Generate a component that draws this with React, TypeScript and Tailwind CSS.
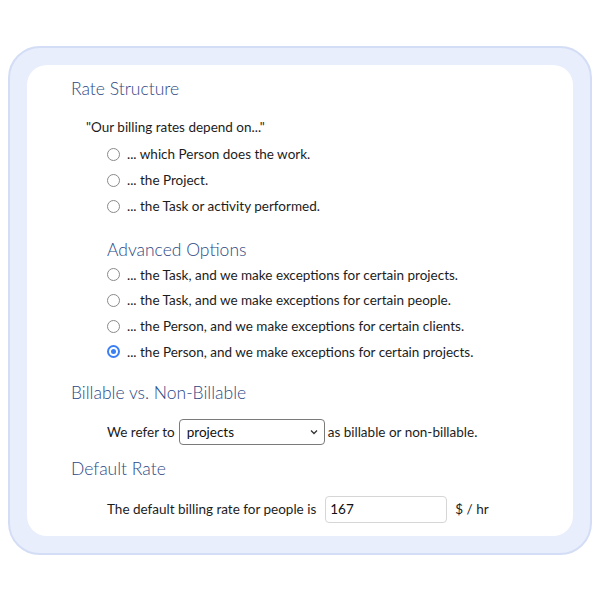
import React from "react";

function Radio({ checked = false, label, h = "h-[26px]" }: { checked?: boolean; label: string; h?: string }) {
  return (
    <div className={`flex items-center ${h}`}>
      {checked ? (
        <span className="w-[13px] h-[13px] rounded-full border-[2px] border-[#3b7ff5] bg-white flex items-center justify-center shrink-0">
          <span className="w-[5px] h-[5px] rounded-full bg-[#3b7ff5]" />
        </span>
      ) : (
        <span className="w-[13px] h-[13px] rounded-full border border-[#8a8a8a] bg-white shrink-0" />
      )}
      <span className="ml-[7px] text-[13.5px] text-[#1c1c1c]">{label}</span>
    </div>
  );
}

export default function App() {
  return (
    <div className="w-[600px] h-[600px] bg-white pt-[46px] pl-[8px]" style={{ fontFamily: "Lato, 'Open Sans', sans-serif" }}>
      <div className="w-[584px] h-[509px] rounded-[32px] border-2 border-[#d3ddf5] bg-[#e9eefc] p-[17px]">
        <div className="w-full h-full rounded-[20px] bg-white pl-[44px] pt-[12px]">
          <h2 className="text-[17.5px] leading-[24px] font-light text-[#2c4884]">Rate Structure</h2>
          <p className="mt-[17px] ml-[15px] text-[13.5px] leading-[18px] text-[#1c1c1c]">"Our billing rates depend on..."</p>
          <div className="mt-[5px] ml-[36px] flex flex-col">
            <Radio label="... which Person does the work." />
            <Radio label="... the Project." />
            <Radio label="... the Task or activity performed." />
          </div>
          <h3 className="mt-[19px] ml-[36px] text-[17.5px] leading-[24px] font-light text-[#2c4884]">Advanced Options</h3>
          <div className="ml-[36px] flex flex-col">
            <Radio h="h-[25.7px]" label="... the Task, and we make exceptions for certain projects." />
            <Radio h="h-[25.7px]" label="... the Task, and we make exceptions for certain people." />
            <Radio h="h-[25.7px]" label="... the Person, and we make exceptions for certain clients." />
            <Radio h="h-[25.7px]" checked label="... the Person, and we make exceptions for certain projects." />
          </div>
          <h2 className="mt-[16px] text-[17.5px] leading-[24px] font-light text-[#2c4884]">Billable vs. Non-Billable</h2>
          <div className="mt-[14px] ml-[36px] flex items-center text-[13.5px] text-[#1c1c1c]">
            <span>We refer to</span>
            <div className="ml-[4px] w-[146px] h-[26px] rounded-[4px] border border-[#7a7a7a] flex items-center justify-between pl-[7px] pr-[5px]">
              <span className="text-[13.5px] text-[#111]">projects</span>
              <svg width="10" height="10" viewBox="0 0 10 10" fill="none" stroke="#333" strokeWidth="1.3">
                <path d="M2 3.5 L5 6.5 L8 3.5" />
              </svg>
            </div>
            <span className="ml-[3px]">as billable or non-billable.</span>
          </div>
          <h2 className="mt-[12px] text-[17.5px] leading-[24px] font-light text-[#2c4884]">Default Rate</h2>
          <div className="mt-[15px] ml-[36px] flex items-center text-[13.5px] text-[#1c1c1c]">
            <span>The default billing rate for people is</span>
            <div className="ml-[9px] w-[122px] h-[27px] rounded-[4px] border border-[#d6d6d6] flex items-center pl-[4px]">
              <span className="text-[13.5px] text-[#111]">167</span>
            </div>
            <span className="ml-[8px]">$ / hr</span>
          </div>
        </div>
      </div>
    </div>
  );
}
